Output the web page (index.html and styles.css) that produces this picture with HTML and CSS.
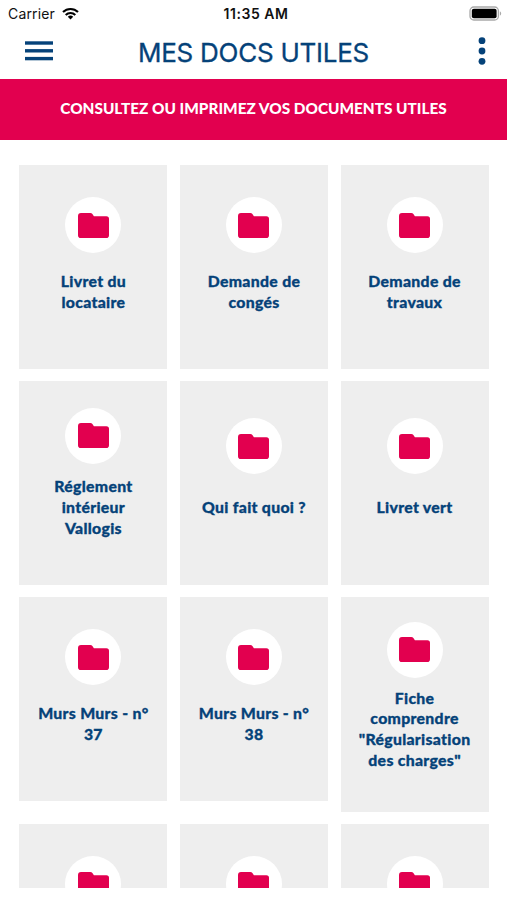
FILE: index.html
```
<!DOCTYPE html>
<html lang="fr">
<head>
    <meta charset="UTF-8">
    <meta name="viewport" content="width=device-width, initial-scale=1.0">
    <title>Mes docs utiles</title>
    <link rel="stylesheet" href="styles.css">
</head>
<body>
    <!-- Folder icon shared by all the cards -->
    <svg class="sprite" width="0" height="0">
        <symbol id="folder" viewBox="0 0 31 25">
            <path d="M3 0h9.2c1 0 1.7.4 2.2 1.1l1.5 2.1H28.4a2.6 2.6 0 0 1 2.6 2.6V22.2a2.8 2.8 0 0 1-2.8 2.8H2.8a2.8 2.8 0 0 1-2.8-2.8V3a3 3 0 0 1 3-3z"/>
        </symbol>
    </svg>

    <!-- Status bar -->
    <div class="status-bar">
        <div class="carrier">
            <span>Carrier</span>
            <svg width="17" height="13" viewBox="0 0 17 13" fill="none" stroke="#000" stroke-width="2.1">
                <path d="M1 5a10.7 10.7 0 0 1 15 0"/>
                <path d="M3.7 7.9a6.9 6.9 0 0 1 9.6 0"/>
                <path d="M8.5 12.4 5.8 9.7a3.9 3.9 0 0 1 5.4 0z" fill="#000" stroke="none"/>
            </svg>
        </div>
        <span class="time">11:35 AM</span>
        <svg class="battery" width="33" height="15" viewBox="0 0 33 15">
            <rect x="1" y="1" width="28.4" height="13" rx="3.8" fill="#fff" stroke="#a9a9a9" stroke-width="1.3"/>
            <rect x="2.8" y="2.8" width="24.8" height="9.4" rx="2" fill="#000"/>
            <path d="M30.9 5.3c1.7.8 1.7 3.6 0 4.4z" fill="#a9a9a9"/>
        </svg>
    </div>

    <!-- Navbar -->
    <header class="navbar">
        <svg width="28" height="20" viewBox="0 0 28 20" fill="#054279">
            <rect y="0.3" width="28" height="3.4"/>
            <rect y="8.1" width="28" height="3.4"/>
            <rect y="15.9" width="28" height="3.4"/>
        </svg>
        <h1>MES DOCS UTILES</h1>
        <svg class="more" width="8" height="28" viewBox="0 0 8 28" fill="#054279">
            <circle cx="4" cy="3.7" r="3.4"/>
            <circle cx="4" cy="14" r="3.4"/>
            <circle cx="4" cy="24.3" r="3.4"/>
        </svg>
    </header>

    <div class="banner">CONSULTEZ OU IMPRIMEZ VOS DOCUMENTS UTILES</div>

    <!-- Documents -->
    <main class="docs">
        <div class="card">
            <div class="icon"><svg><use href="#folder"/></svg></div>
            <p>Livret du<br>locataire</p>
        </div>
        <div class="card">
            <div class="icon"><svg><use href="#folder"/></svg></div>
            <p>Demande de<br>congés</p>
        </div>
        <div class="card">
            <div class="icon"><svg><use href="#folder"/></svg></div>
            <p>Demande de<br>travaux</p>
        </div>
        <div class="card">
            <div class="icon"><svg><use href="#folder"/></svg></div>
            <p>Réglement<br>intérieur<br>Vallogis</p>
        </div>
        <div class="card">
            <div class="icon"><svg><use href="#folder"/></svg></div>
            <p>Qui fait quoi ?</p>
        </div>
        <div class="card">
            <div class="icon"><svg><use href="#folder"/></svg></div>
            <p>Livret vert</p>
        </div>
        <div class="card">
            <div class="icon"><svg><use href="#folder"/></svg></div>
            <p>Murs Murs - n°<br>37</p>
        </div>
        <div class="card">
            <div class="icon"><svg><use href="#folder"/></svg></div>
            <p>Murs Murs - n°<br>38</p>
        </div>
        <div class="card tall">
            <div class="icon"><svg><use href="#folder"/></svg></div>
            <p>Fiche<br>comprendre<br>"Régularisation<br>des charges"</p>
        </div>
        <div class="card">
            <div class="icon"><svg><use href="#folder"/></svg></div>
            <p></p>
        </div>
        <div class="card">
            <div class="icon"><svg><use href="#folder"/></svg></div>
            <p></p>
        </div>
        <div class="card">
            <div class="icon"><svg><use href="#folder"/></svg></div>
            <p></p>
        </div>
    </main>
</body>
</html>
```
FILE: styles.css
```
* {
    box-sizing: border-box;
}

body {
    display: flex;
    flex-direction: column;
    height: 900px;
    margin: 0;
    padding-bottom: 12px;
    overflow: hidden;
    background-color: #fff;
    font-family: Lato, sans-serif;
}

svg {
    display: block;
    flex-shrink: 0;
}

.sprite {
    position: absolute;
}

/* Status bar */
.status-bar {
    display: grid;
    grid-template-columns: 1fr auto 1fr;
    align-items: center;
    height: 27px;
    padding: 0 5px 0 8px;
    font-family: Inter, sans-serif;
    font-size: 14px;
    color: #111;
}

.carrier {
    display: flex;
    align-items: center;
    gap: 7px;
    letter-spacing: 0.15px;
}

.time {
    margin-left: 2px;
    font-weight: 600;
    letter-spacing: 0.55px;
}

.battery {
    justify-self: end;
}

/* Navbar */
.navbar {
    display: grid;
    grid-template-columns: 1fr auto 1fr;
    align-items: center;
    height: 52px;
    padding: 0 20px 4px 25px;
}

.navbar h1 {
    margin: 2px 5px 0 0;
    font-family: Inter, sans-serif;
    font-size: 26px;
    font-weight: 400;
    letter-spacing: -0.25px;
    color: #054279;
    -webkit-text-stroke: 0.3px #054279;
}

.navbar .more {
    justify-self: end;
    margin-right: 1px;
}

/* Banner */
.banner {
    height: 61px;
    flex-shrink: 0;
    background-color: #e2004f;
    color: #fff;
    font-size: 15.35px;
    font-weight: 900;
    line-height: 59px;
    text-align: center;
    white-space: nowrap;
}

/* Documents */
.docs {
    flex: 1;
    min-height: 0;
    display: grid;
    grid-template-columns: repeat(3, 148px);
    grid-auto-rows: max-content;
    align-content: start;
    align-items: start;
    gap: 12px 12.6px;
    padding: 25px 0 0 19.4px;
    overflow: hidden;
}

.card {
    display: grid;
    grid-template-rows: 1fr 56px 1fr auto 2fr;
    justify-items: center;
    height: 204px;
    padding: 18.5px 0 28.5px;
    background-color: #eee;
}

.card.tall {
    height: 215px;
}

.card .icon {
    grid-row: 2;
    display: flex;
    justify-content: center;
    align-items: center;
    width: 56px;
    height: 56px;
    border-radius: 50%;
    background-color: #fff;
}

.card .icon svg {
    width: 31px;
    height: 25px;
    fill: #e2004f;
}

.card p {
    grid-row: 4;
    margin: 4px 0 1px;
    color: #054279;
    font-size: 15.8px;
    font-weight: 900;
    font-variant-ligatures: none;
    letter-spacing: 0.3px;
    line-height: 20.7px;
    text-align: center;
    white-space: nowrap;
    -webkit-text-stroke: 0.3px #054279;
}

.card p:empty {
    height: 41.4px;
}
```
